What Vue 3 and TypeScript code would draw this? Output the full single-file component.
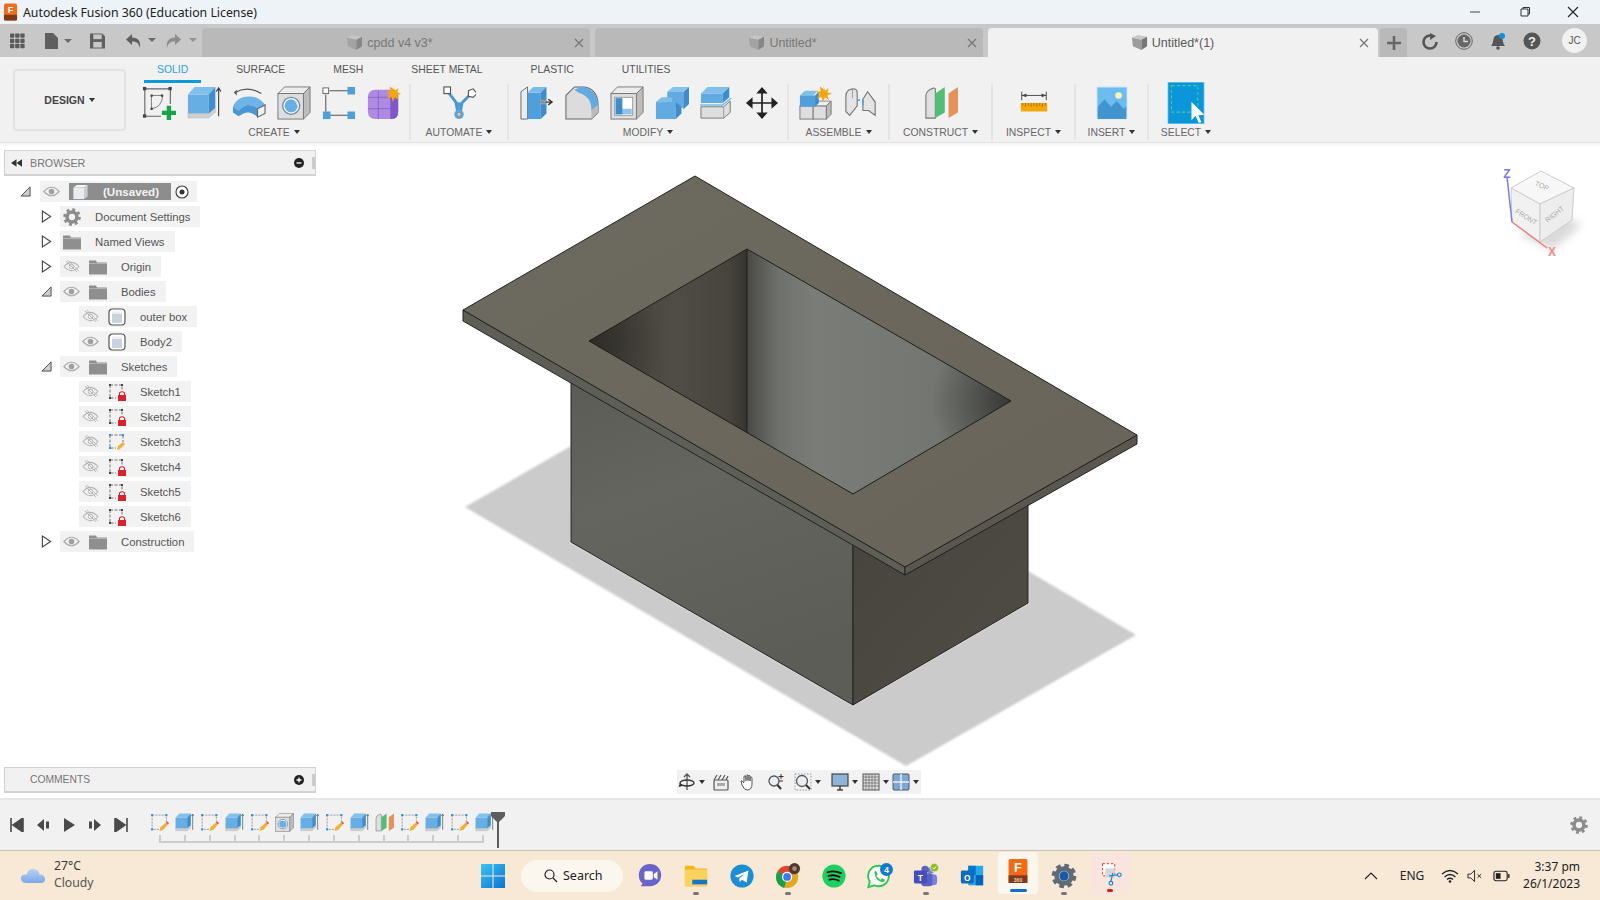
<script setup lang="ts">
interface Row { label: string; level: number; tri: string; eye: string; icon: string }
const rows: Row[] = [
  { label: 'Document Settings', level: 1, tri: 'closed', eye: '', icon: 'gear' },
  { label: 'Named Views', level: 1, tri: 'closed', eye: '', icon: 'folder' },
  { label: 'Origin', level: 1, tri: 'closed', eye: 'off', icon: 'folder' },
  { label: 'Bodies', level: 1, tri: 'open', eye: 'on', icon: 'folder' },
  { label: 'outer box', level: 2, tri: '', eye: 'off', icon: 'body' },
  { label: 'Body2', level: 2, tri: '', eye: 'on', icon: 'body' },
  { label: 'Sketches', level: 1, tri: 'open', eye: 'on', icon: 'folder' },
  { label: 'Sketch1', level: 2, tri: '', eye: 'off', icon: 'lock' },
  { label: 'Sketch2', level: 2, tri: '', eye: 'off', icon: 'lock' },
  { label: 'Sketch3', level: 2, tri: '', eye: 'off', icon: 'draw' },
  { label: 'Sketch4', level: 2, tri: '', eye: 'off', icon: 'lock' },
  { label: 'Sketch5', level: 2, tri: '', eye: 'off', icon: 'lock' },
  { label: 'Sketch6', level: 2, tri: '', eye: 'off', icon: 'lock' },
  { label: 'Construction', level: 1, tri: 'closed', eye: 'on', icon: 'folder' }
]
const ribbonTabs = ['SOLID', 'SURFACE', 'MESH', 'SHEET METAL', 'PLASTIC', 'UTILITIES']
const groups = [
  { label: 'CREATE', width: 272, icons: ['sketch', 'extrude', 'revolve', 'hole', 'pattern', 'form'] },
  { label: 'AUTOMATE', width: 98, icons: ['auto'] },
  { label: 'MODIFY', width: 280, icons: ['press', 'fillet', 'shell', 'combine', 'offset', 'move'] },
  { label: 'ASSEMBLE', width: 101, icons: ['newcomp', 'joint'] },
  { label: 'CONSTRUCT', width: 103, icons: ['plane'] },
  { label: 'INSPECT', width: 83, icons: ['measure'] },
  { label: 'INSERT', width: 73, icons: ['insert'] },
  { label: 'SELECT', width: 78, icons: ['select'] }
]
const timeline = ['draw', 'extrude', 'draw', 'extrude', 'draw', 'hole', 'extrude', 'draw', 'extrude', 'plane', 'draw', 'extrude', 'draw', 'extrude']
const documents = [
  { name: 'cpdd v4 v3*', active: false },
  { name: 'Untitled*', active: false },
  { name: 'Untitled*(1)', active: true }
]
</script>

<template>
  <div class="app">
    <svg class="defs" width="0" height="0" aria-hidden="true">
      <defs>
        <linearGradient id="holeL" x1="0" y1="0" x2="1" y2="0">
          <stop offset="0" stop-color="#413f39" /><stop offset="0.55" stop-color="#504d46" /><stop offset="0.88" stop-color="#47443e" /><stop offset="1" stop-color="#36342f" />
        </linearGradient>
        <linearGradient id="holeR" x1="0" y1="0" x2="1" y2="0">
          <stop offset="0" stop-color="#4a4a45" /><stop offset="0.12" stop-color="#6f716c" /><stop offset="0.25" stop-color="#7a7c77" /><stop offset="1" stop-color="#70726d" />
        </linearGradient>
        <radialGradient id="holeCornerL" gradientUnits="userSpaceOnUse" cx="589" cy="341" r="75">
          <stop offset="0" stop-color="#26241f" stop-opacity=".75" /><stop offset="1" stop-color="#26241f" stop-opacity="0" />
        </radialGradient>
        <radialGradient id="holeCornerR" gradientUnits="userSpaceOnUse" cx="1011" cy="401" r="80">
          <stop offset="0" stop-color="#2c2d2b" stop-opacity=".85" /><stop offset="1" stop-color="#2c2d2b" stop-opacity="0" />
        </radialGradient>
        <linearGradient id="bodyL" x1="0" y1="0" x2="0.3" y2="1">
          <stop offset="0" stop-color="#5c5c56" /><stop offset="0.4" stop-color="#65655f" /><stop offset="1" stop-color="#5d5d58" />
        </linearGradient>
        <linearGradient id="bodyR" x1="0" y1="0" x2="1" y2="1">
          <stop offset="0" stop-color="#47443e" /><stop offset="1" stop-color="#504d46" />
        </linearGradient>
        <linearGradient id="plate" x1="0" y1="0" x2="1" y2="1">
          <stop offset="0" stop-color="#6c6a61" /><stop offset="0.5" stop-color="#6b675c" /><stop offset="1" stop-color="#68645b" />
        </linearGradient>
        <filter id="soft" x="-5%" y="-5%" width="110%" height="110%"><feGaussianBlur stdDeviation="0.8" /></filter>
        <filter id="cubeShadow" x="-30%" y="-30%" width="160%" height="160%"><feGaussianBlur stdDeviation="4" /></filter>

        <symbol id="i-sketch" viewBox="0 0 36 36">
          <path d="M3 3H30V19M3 3V32H20" fill="none" stroke="#666" stroke-width="1.2" />
          <path d="M10 10H21M10 10V24" fill="none" stroke="#777" stroke-width="1" /><path d="M10 24Q21 23 22 10" fill="none" stroke="#777" stroke-width="1" />
          <g fill="#444"><rect x="1" y="1" width="3.5" height="3.5" /><rect x="28" y="1" width="3.5" height="3.5" /><rect x="1" y="30" width="3.5" height="3.5" /><rect x="9" y="9" width="2.4" height="2.4" /><rect x="20" y="9" width="2.4" height="2.4" /><rect x="9" y="23" width="2.4" height="2.4" /></g>
          <path d="M28.500 21V36M21 28.500H36" stroke="#15a44a" stroke-width="4.600" />
        </symbol>
        <symbol id="i-extrude" viewBox="0 0 36 36">
          <polygon points="1,28 1,34 23,34 30,28 30,23 23,28" fill="#cfcfcf" stroke="#bbb" stroke-width=".5" />
          <polygon points="1,9 23,9 23,29 1,29" fill="#67aee4" />
          <polygon points="1,9 8,1 30,1 23,9" fill="#82c0ec" />
          <polygon points="23,9 30,1 30,23 23,29" fill="#3f8ecb" />
          <path d="M33.500 32V3M31 6L33.500 2 36 6" fill="none" stroke="#444" stroke-width="1.200" />
        </symbol>
        <symbol id="i-revolve" viewBox="0 0 36 36">
          <path d="M3 7Q17 -1 31 8" fill="none" stroke="#555" stroke-width="1.200" /><path d="M2 7l3-3v6z" fill="#555" />
          <path d="M1 22C4 14 11 11 18 11S31 14 35 20L27 24C24 21 21 20 17 20S10 22 7 26Z" fill="#6fb4e7" />
          <path d="M1 22L7 26V32L1 28ZM7 26C10 22 14 20 17 20 21 20 24 21 27 24V33C23 29 20 28 17 28 13 28 10 30 7 32Z" fill="#4a97d4" />
          <path d="M27 24L35 20V29L27 33Z" fill="#f1f1f1" stroke="#666" stroke-width="1.200" />
        </symbol>
        <symbol id="i-hole" viewBox="0 0 36 36">
          <polygon points="1,8 8,1 35,1 28,8" fill="#ececec" stroke="#777" />
          <polygon points="28,8 35,1 35,28 28,35" fill="#bdbdbd" stroke="#777" />
          <rect x="1" y="8" width="27" height="27" fill="#dedede" stroke="#777" />
          <circle cx="15" cy="21" r="9" fill="#fff" stroke="#6b8ca8" stroke-width="1.500" /><circle cx="15" cy="21" r="7" fill="#67aee4" /><path d="M15 14a7 7 0 0 1 6 10a8 8 0 0 0-6-10Z" fill="#eef" />
        </symbol>
        <symbol id="i-pattern" viewBox="0 0 36 36">
          <path d="M8 5H28M4 9V27M28 31H8" stroke="#555" stroke-width="1.100" fill="none" />
          <rect x="1" y="2" width="6" height="6" fill="#fff" stroke="#666" />
          <rect x="27" y="1" width="8" height="8" fill="#4f9fdc" /><rect x="1" y="27" width="8" height="8" fill="#4f9fdc" /><rect x="27" y="27" width="8" height="8" fill="#4f9fdc" />
        </symbol>
        <symbol id="i-form" viewBox="0 0 36 36">
          <path d="M9 4H26Q33 4 33 10V27Q33 35 26 35H9Q1 35 1 27V12Q1 4 9 4Z" fill="#ae8ae2" />
          <path d="M25 10H33V27Q33 35 26 35H25Z" fill="#7f57c6" />
          <path d="M1 12H25M1 24H25M12 5V35M25 5V35" stroke="#8a64cd" stroke-width="1" fill="none" />
          <path d="M28 0l1.500 5 4-3-1.500 5 4 1-4 2 2 5-4.500-3-2 5-1.500-5-5 1 3-4-4-3 5-.5-1-5 4.500 3Z" fill="#f5a511" />
        </symbol>
        <symbol id="i-auto" viewBox="0 0 36 36">
          <path d="M7 7L16 19M31 8L20 19M15 19H21L19 30H17Z" fill="#5ea5dc" stroke="#4a97d4" stroke-width="3" />
          <rect x="2" y="1" width="7" height="7" fill="#fff" stroke="#555" stroke-width="1.200" />
          <polygon points="28,5 33,3 37,8 33,12 28,11" fill="#fff" stroke="#555" stroke-width="1.200" />
          <circle cx="18" cy="30" r="5" fill="#5ea5dc" /><circle cx="18" cy="30" r="2.200" fill="#ccc" stroke="#777" stroke-width=".6" />
        </symbol>
        <symbol id="i-press" viewBox="0 0 36 36">
          <polygon points="1,35 1,6 8,1 8,35" fill="#ececec" stroke="#666" />
          <polygon points="8,35 8,7 22,7 22,35" fill="#4f9fdc" />
          <polygon points="8,7 14,1 28,1 22,7" fill="#7abbe9" />
          <polygon points="22,7 28,1 28,29 22,35" fill="#3e8dca" />
          <path d="M21 17H34M30 14l4 3-4 3" fill="none" stroke="#333" stroke-width="1.400" /><rect x="21" y="14.500" width="7" height="5" fill="#aaa" opacity=".7" />
        </symbol>
        <symbol id="i-fillet" viewBox="0 0 36 36">
          <path d="M1 10L10 1H19C28 1 35 8 35 20V28L28 35H1Z" fill="#dcdcdc" stroke="#666" stroke-width="1.100" />
          <path d="M17 1C27 1 35 9 35 20L28 26C28 16 24 10 14 7L10 4Z" fill="#62aae2" />
          <path d="M28 26L35 20V28L28 35Z" fill="#bbb" />
        </symbol>
        <symbol id="i-shell" viewBox="0 0 36 36">
          <polygon points="1,8 8,1 35,1 28,8" fill="#ececec" stroke="#777" />
          <polygon points="28,8 35,1 35,28 28,35" fill="#bdbdbd" stroke="#777" />
          <rect x="1" y="8" width="27" height="27" fill="#dedede" stroke="#777" />
          <rect x="5" y="12" width="19" height="19" fill="#fff" stroke="#999" />
          <polygon points="6,13 13,13 13,24 23,24 23,30 6,30" fill="#8fc3ec" />
          <polygon points="6,13 13,13 13,30 6,30" fill="#3e8dca" />
        </symbol>
        <symbol id="i-combine" viewBox="0 0 36 36">
          <polygon points="13,6 19,1 36,1 29,6" fill="#86c2ec" />
          <polygon points="13,6 30,6 30,23 13,23" fill="#62aae2" /><polygon points="30,6 36,1 36,19 30,25" fill="#3e8dca" />
          <polygon points="1,17 7,12 18,12 18,17" fill="#7fbdea" />
          <polygon points="1,17 22,17 22,35 1,35" fill="#62aae2" /><polygon points="22,17 28,22 28,29 22,35" fill="#3e8dca" />
        </symbol>
        <symbol id="i-offset" viewBox="0 0 36 36">
          <polygon points="1,22 25,22 32,16 32,28 25,34 1,34" fill="#dedede" stroke="#777" />
          <path d="M25 22V34" stroke="#999" />
          <polygon points="1,8 8,1 31,1 24,8" fill="#82c0ec" /><polygon points="1,8 24,8 24,18 1,18" fill="#62aae2" /><polygon points="24,8 31,1 31,12 24,18" fill="#3e8dca" />
          <path d="M-1 20H24L33 13" fill="none" stroke="#7dbcea" stroke-width="1.600" />
        </symbol>
        <symbol id="i-move" viewBox="0 0 36 36">
          <path d="M18 4V32M4 18H32" stroke="#222" stroke-width="1.800" />
          <path d="M18 1l6 7H12ZM18 35l6-7H12ZM1 18l7-6V24ZM35 18l-7-6V24Z" fill="#222" />
        </symbol>
        <symbol id="i-newcomp" viewBox="0 0 36 36">
          <rect x="1" y="21" width="14" height="14" fill="#dedede" stroke="#777" /><rect x="15" y="21" width="14" height="14" fill="#dedede" stroke="#777" /><polygon points="15,21 20,16 34,16 29,21" fill="#eee" stroke="#888" /><polygon points="29,21 34,16 34,30 29,35" fill="#bbb" stroke="#777" />
          <polygon points="1,10 6,5 20,5 15,10" fill="#82c0ec" /><rect x="1" y="10" width="16" height="12" fill="#4f9fdc" /><polygon points="17,10 21,6 21,18 17,22" fill="#3e8dca" />
          <path d="M26 0l1.500 5 4-3-1.500 5 5 1-5 2 2 5-4.500-3-2 5-1.500-5-5 1 3-4-4-3 5-.5-1-5 4.500 3Z" fill="#f5a511" />
        </symbol>
        <symbol id="i-joint" viewBox="0 0 36 36">
          <path d="M2 11C2 5 6 3 10 3 14 3 14 6 14 9V21L6 31 2 27Z" fill="#e4e4e4" stroke="#777" stroke-width="1.200" />
          <path d="M20 14L25 6 33 17V31L26 26H20Z" fill="#e4e4e4" stroke="#777" stroke-width="1.200" />
          <path d="M14 15H17M20 14V20" stroke="#5ea5dc" stroke-width="2" fill="none" /><path d="M9 4V13" stroke="#999" />
        </symbol>
        <symbol id="i-plane" viewBox="0 0 36 36">
          <path d="M2 34V10Q2 5 10 2L12 3V34Z" fill="#dfdfdf" stroke="#777" stroke-width="1.100" />
          <polygon points="12,34 12,8 22,1 22,28" fill="#52bd75" />
          <polygon points="26,34 26,8 36,1 36,28" fill="#e5935a" />
        </symbol>
        <symbol id="i-measure" viewBox="0 0 36 36">
          <path d="M5 10H31M5 6V15M31 6V15" fill="none" stroke="#444" stroke-width="1" /><path d="M5 10l5-2v4ZM31 10l-5-2v4Z" fill="#444" />
          <rect x="4" y="18" width="28" height="9" fill="#f4a70f" /><path d="M6 18V21M9 18V22M12 18V21M15 18V22M18 18V21M21 18V22M24 18V21M27 18V22M30 18V21" stroke="#8a5a05" stroke-width=".7" />
        </symbol>
        <symbol id="i-insert" viewBox="0 0 36 36">
          <rect x="2" y="1" width="32" height="34" fill="#6cbcf2" stroke="#dcecf8" /><circle cx="25" cy="10" r="3.500" fill="#fdf4b4" />
          <path d="M3 35V22L10 14 17 22 23 16 30 24 33 22V35Z" fill="#3e8fca" opacity=".9" />
        </symbol>
        <symbol id="i-select" viewBox="0 0 40 46">
          <rect x="0" y="0" width="40" height="46" fill="#0a96d8" stroke="#bfe3f5" />
          <rect x="4" y="4" width="29" height="29" fill="none" stroke="#35d39a" stroke-width="1.200" stroke-dasharray="3.500 2.500" />
          <path d="M26 22V42L30.500 37 34 45 37 44 33.500 36.500 40 36Z" fill="#fff" />
        </symbol>
        <symbol id="i-draw" viewBox="0 0 36 36">
          <path d="M4 4H31V20M4 4V31H20" fill="none" stroke="#666" stroke-width="1.100" stroke-dasharray="4 2" />
          <g fill="#2a96e0"><rect x="2" y="2" width="4" height="4" /><rect x="29" y="2" width="4" height="4" /><rect x="2" y="29" width="4" height="4" /></g>
          <path d="M18 34L20 27 30 18 34 22 25 32Z" fill="#eeb23a" /><path d="M30 18l3-2 3 3-2 3Z" fill="#e24d4d" />
        </symbol>
        <symbol id="i-eye" viewBox="0 0 18 12">
          <path d="M1 6Q9 -3 17 6 9 15 1 6Z" fill="#f3f3f3" stroke="#aaa" stroke-width="1.300" /><circle cx="9" cy="6" r="3" fill="#a0a0a0" />
        </symbol>
        <symbol id="i-eyeoff" viewBox="0 0 18 14">
          <path d="M1 7Q9 -2 17 7 9 16 1 7Z" fill="none" stroke="#b4b4b4" stroke-width="1.200" /><circle cx="9" cy="7" r="2.500" fill="none" stroke="#b4b4b4" />
          <path d="M3 1L15 13M5 0L17 12" stroke="#b4b4b4" stroke-width="1" />
        </symbol>
        <symbol id="i-folder" viewBox="0 0 18 15">
          <path d="M0 1H7L8 3H18V15H0Z" fill="#8f8f8f" /><path d="M0 4H18" stroke="#bbb" stroke-width=".8" />
        </symbol>
        <symbol id="i-gear" viewBox="0 0 20 20">
          <circle cx="10" cy="10" r="5.500" fill="none" stroke="#8c8c8c" stroke-width="4" />
          <circle cx="10" cy="10" r="8.300" fill="none" stroke="#8c8c8c" stroke-width="3" stroke-dasharray="3.200 3.320" />
        </symbol>
        <symbol id="i-body" viewBox="0 0 18 18">
          <rect x="1" y="1" width="16" height="16" rx="3.500" fill="#fff" stroke="#555" stroke-width="1.200" />
          <rect x="4" y="5" width="10" height="10" fill="#c9d3dd" /><rect x="4" y="3.500" width="10" height="2.500" fill="#eee" />
        </symbol>
        <symbol id="i-lock" viewBox="0 0 18 18">
          <path d="M2 2H14V8M2 2V15H8" fill="none" stroke="#666" stroke-width=".9" stroke-dasharray="3 1.500" />
          <g fill="#444"><rect x="1" y="1" width="2" height="2" /><rect x="13" y="1" width="2" height="2" /><rect x="1" y="14" width="2" height="2" /></g>
          <rect x="10" y="12" width="8" height="6" fill="#d8222c" /><path d="M11.500 12V10Q14 7.500 16.500 10V12" fill="none" stroke="#d8222c" stroke-width="1.100" />
        </symbol>
        <symbol id="i-drawsm" viewBox="0 0 18 18">
          <path d="M2 2H15V9M2 2V15H8" fill="none" stroke="#666" stroke-width=".9" stroke-dasharray="3 1.500" />
          <g fill="#2a96e0"><rect x="1" y="1" width="2" height="2" /><rect x="14" y="1" width="2" height="2" /><rect x="1" y="14" width="2" height="2" /></g>
          <path d="M9 17L10 13 15 9 17 11 12 16Z" fill="#eeb23a" />
        </symbol>
        <symbol id="i-cube" viewBox="0 0 18 18">
          <polygon points="1,4 7,1 17,3 11,6" fill="#c9c9c9" /><polygon points="1,4 11,6 11,17 2,13" fill="#9c9c9c" /><polygon points="11,6 17,3 17,13 11,17" fill="#777" />
        </symbol>
      </defs>
    </svg>

    <header class="titlebar">
      <svg class="app-logo" viewBox="0 0 16 18">
        <rect x="1" y="0" width="14" height="18" rx="2" fill="#f26b1d" /><rect x="1" y="12" width="14" height="6" rx="1" fill="#7c3a16" />
        <text x="8" y="10.500" text-anchor="middle" class="logo-f">F</text>
      </svg>
      <span class="title-text">Autodesk Fusion 360 (Education License)</span>
      <div class="win-ctrls">
        <svg viewBox="0 0 12 12"><path d="M1 6H11" stroke="#444" fill="none" /></svg>
        <svg viewBox="0 0 12 12"><path d="M3 3H10V10H3ZM5 3V1.500H11.500V8H10" stroke="#333" fill="none" /></svg>
        <svg viewBox="0 0 12 12"><path d="M1 1L11 11M11 1L1 11" stroke="#222" fill="none" stroke-width="1.100" /></svg>
      </div>
    </header>

    <nav class="tabbar">
      <div class="quick">
        <svg class="q grid" viewBox="0 0 16 16"><g fill="#5a5a5a"><rect v-for="n in 9" :key="n" :x="(n - 1) % 3 * 5.500" :y="Math.floor((n - 1) / 3) * 5.500" width="4.600" height="4.600" rx=".8" /></g></svg>
        <svg class="q file" viewBox="0 0 28 16"><path d="M1 0H9L14 5V16H1Z" fill="#5f5f5f" /><path d="M20 6H28L24 10Z" fill="#6a6a6a" /></svg>
        <svg class="q save" viewBox="0 0 16 16"><path d="M0 0H13L16 3V16H0Z" fill="#5f5f5f" /><rect x="3.500" y="1" width="9" height="5" fill="#c8c8c8" /><rect x="3.500" y="9" width="9" height="6" fill="#c8c8c8" /></svg>
        <svg class="q undo" viewBox="0 0 34 16"><path d="M7 1L1 6.500 7 12V8.500C11 8 14 10 15 15 16 8 13 4.500 7 4.500Z" fill="#5f5f5f" /><path d="M23 5H31L27 9Z" fill="#6a6a6a" /></svg>
        <svg class="q redo" viewBox="0 0 34 16"><path d="M9 1L15 6.500 9 12V8.500C5 8 2 10 1 15 0 8 3 4.500 9 4.500Z" fill="#8d8d8d" /><path d="M23 5H31L27 9Z" fill="#929292" /></svg>
      </div>
      <div class="doc-tabs">
        <div v-for="d in documents" :key="d.name" class="doc-tab" :class="{ active: d.active }">
          <span class="doc-name"><svg class="doc-ic"><use href="#i-cube" /></svg>{{ d.name }}</span>
          <svg class="doc-x" viewBox="0 0 10 10"><path d="M1 1L9 9M9 1L1 9" stroke="#777" stroke-width="1.300" fill="none" /></svg>
        </div>
      </div>
      <div class="doc-plus"><svg viewBox="0 0 14 14"><path d="M7 0V14M0 7H14" stroke="#666" stroke-width="2.600" /></svg></div>
      <div class="tools">
        <svg viewBox="0 0 18 18"><circle cx="9" cy="10" r="6.500" fill="none" stroke="#555" stroke-width="2.600" stroke-dasharray="32 8" /><path d="M9 1L15 4 9 8Z" fill="#555" /></svg>
        <svg viewBox="0 0 18 18"><circle cx="9" cy="9" r="8.300" fill="none" stroke="#666" /><circle cx="9" cy="9" r="6.500" fill="#666" /><path d="M9 5V9.500H13" stroke="#ddd" stroke-width="1.400" fill="none" /></svg>
        <svg viewBox="0 0 18 18"><path d="M2 14C4 12 4 9 4.500 7 5 4 7 3 9 3S13 4 13.500 7C14 9 14 12 16 14Z" fill="#555" /><circle cx="9" cy="16" r="1.800" fill="#555" /><circle cx="13" cy="4" r="3" fill="#0f8fdc" /></svg>
        <svg viewBox="0 0 18 18"><circle cx="9" cy="9" r="8.500" fill="#555" /><text x="9" y="13.500" text-anchor="middle" class="help-q">?</text></svg>
      </div>
      <div class="avatar">JC</div>
    </nav>

    <section class="ribbon">
      <div class="design">DESIGN<i class="caret" /></div>
      <div class="ribbon-main">
        <div class="ribbon-tabs">
          <span v-for="(t, i) in ribbonTabs" :key="t" class="rtab" :class="{ on: i === 0 }">{{ t }}</span>
        </div>
        <div class="ribbon-groups">
          <div v-for="g in groups" :key="g.label" class="group" :style="{ width: g.width + 'px' }">
            <div class="group-icons">
              <svg v-for="ic in g.icons" :key="ic" class="rb-ic" :class="'ic-' + ic"><use :href="'#i-' + ic" /></svg>
            </div>
            <div class="group-label">{{ g.label }}<i class="caret" /></div>
          </div>
        </div>
      </div>
    </section>

    <main class="canvas">
      <svg class="scene" viewBox="0 143 1600 655">
        <polygon points="465,507 571,446 571,542 853,705 1028,603 1028,571 1136,635 906,766" fill="#cbcbcb" filter="url(#soft)" />
        <polygon points="571,380 853,544 853,705 571,542" fill="url(#bodyL)" stroke="#222" stroke-width="1" />
        <polygon points="853,544 905,575 1028,505 1028,603 853,705" fill="url(#bodyR)" stroke="#222" stroke-width="1" />
        <polygon points="463,310 905,567 905,575 463,321" fill="#5d5e56" stroke="#222" stroke-width="1" />
        <polygon points="905,567 1137,435 1137,444 905,575" fill="#5a5750" stroke="#222" stroke-width="1" />
        <polygon points="695,176 1137,435 905,567 463,310" fill="url(#plate)" stroke="#222" stroke-width="1" />
        <polygon points="589,341 747,249 747,433" fill="url(#holeL)" />
        <polygon points="589,341 747,249 747,433" fill="url(#holeCornerL)" />
        <polygon points="747,249 1011,401 853,494 747,433" fill="url(#holeR)" />
        <polygon points="747,249 1011,401 853,494 747,433" fill="url(#holeCornerR)" />
        <path d="M589 341L747 249 1011 401 853 494ZM747 249V433" fill="none" stroke="#1e1e1e" stroke-width="1" />
      </svg>

      <svg class="viewcube" viewBox="1495 160 100 105">
        <polygon points="1520,235 1552,250 1582,225 1550,210" fill="#bbb" opacity=".55" filter="url(#cubeShadow)" />
        <polygon points="1541,171 1574,188 1540,204 1511,188" fill="#f7f7f7" stroke="#ccc" />
        <polygon points="1511,188 1540,204 1540,242 1512,222" fill="#f1f1f1" stroke="#ccc" />
        <polygon points="1540,204 1574,188 1572,220 1540,242" fill="#ededed" stroke="#ccc" />
        <path d="M1507 177L1512 222" stroke="#7a7aee" stroke-width="1.500" />
        <path d="M1512 222L1547 248" stroke="#e88080" stroke-width="1.500" />
        <text x="1507" y="178" text-anchor="middle" class="axis z">Z</text>
        <text x="1552" y="256" text-anchor="middle" class="axis x">X</text>
        <text x="1541" y="188" text-anchor="middle" class="cube-t" transform="rotate(25 1541 188)">TOP</text>
        <text x="1525" y="219" text-anchor="middle" class="cube-t" transform="rotate(32 1525 219)">FRONT</text>
        <text x="1556" y="216" text-anchor="middle" class="cube-t" transform="rotate(-38 1556 216)">RIGHT</text>
      </svg>

      <aside class="side">
        <div class="panel-head">
          <svg class="back" viewBox="0 0 12 8"><path d="M6 0V8L0 4ZM12 0V8L6 4Z" fill="#333" /></svg>
          <span class="panel-title">BROWSER</span>
          <svg class="dot" viewBox="0 0 10 10"><circle cx="5" cy="5" r="5" fill="#222" /><path d="M2.500 5H7.500" stroke="#fff" stroke-width="1.300" /></svg>
          <span class="grip" />
        </div>
        <div class="tree">
          <div class="row lv0">
            <svg class="tri" viewBox="0 0 12 12"><path d="M1 11L11 1V11Z" fill="#ccc" stroke="#444" stroke-width="1" /></svg>
            <div class="pill root-pill">
              <svg class="eye"><use href="#i-eye" /></svg>
              <div class="root-block">
                <svg class="root-ic" viewBox="0 0 18 18"><polygon points="1,4 5,1 17,1 13,4" fill="#f5f5f5" /><rect x="1" y="4" width="12" height="13" fill="#e8ecef" /><polygon points="13,4 17,1 17,14 13,17" fill="#c9ced3" /></svg>
                <span>(Unsaved)</span>
              </div>
              <svg class="radio" viewBox="0 0 14 14"><circle cx="7" cy="7" r="6" fill="#fff" stroke="#444" stroke-width="1.200" /><circle cx="7" cy="7" r="2.500" fill="#333" /></svg>
            </div>
          </div>
          <div v-for="r in rows" :key="r.label" class="row" :class="'lv' + r.level">
            <svg v-if="r.tri === 'closed'" class="tri" viewBox="0 0 12 14"><path d="M1.500 1V13L10.500 7Z" fill="#fff" stroke="#444" stroke-width="1.200" /></svg>
            <svg v-else-if="r.tri === 'open'" class="tri" viewBox="0 0 12 12"><path d="M1 11L11 1V11Z" fill="#ccc" stroke="#444" stroke-width="1" /></svg>
            <span v-else class="tri" />
            <div class="pill">
              <svg v-if="r.eye === 'on'" class="eye"><use href="#i-eye" /></svg>
              <svg v-if="r.eye === 'off'" class="eye"><use href="#i-eyeoff" /></svg>
              <svg class="node-ic" :class="{ solo: !r.eye }">
                <use :href="'#i-' + (r.icon === 'draw' ? 'drawsm' : r.icon)" />
              </svg>
              <span class="row-label">{{ r.label }}</span>
            </div>
          </div>
        </div>
        <div class="panel-head comments">
          <span class="panel-title">COMMENTS</span>
          <svg class="dot" viewBox="0 0 10 10"><circle cx="5" cy="5" r="5" fill="#222" /><path d="M2.500 5H7.500M5 2.500V7.500" stroke="#fff" stroke-width="1.300" /></svg>
          <span class="grip" />
        </div>
      </aside>

      <div class="navbar">
        <svg class="nv" viewBox="0 0 18 18"><path d="M9 1V17M6 4L9 1 12 4" fill="none" stroke="#555" stroke-width="1.300" /><ellipse cx="9" cy="10" rx="7" ry="3" fill="none" stroke="#333" stroke-width="1.400" /><path d="M2 10l-1.500 4 4-1Z" fill="#333" /></svg><i class="caret cr" />
        <svg class="nv m7" viewBox="0 0 18 18"><rect x="2" y="7" width="14" height="10" rx="1" fill="#eee" stroke="#555" stroke-width="1.200" /><rect x="5" y="10" width="8" height="3" fill="#aaa" /><path d="M2 7L5 2M6 7L9 2M10 7L13 2M14 7L16 3" stroke="#555" stroke-width="1.200" /></svg>
        <svg class="nv m9" viewBox="0 0 18 18"><path d="M5 9V4Q5 2.500 6 3 7 3 7 5V8M7 7V2.500Q7.500 1 9 2.500V8M9 7V3Q10 1.500 11 3V8M11 8V4.500Q12.500 3 13 5V11Q13 17 8 17 5 17 3 12L2 8Q3 7 5 10" fill="#fff" stroke="#555" stroke-width="1" /></svg>
        <svg class="nv m10" viewBox="0 0 18 18"><circle cx="7" cy="8" r="5" fill="#e9eff4" stroke="#555" stroke-width="1.300" /><path d="M10.500 12L14 16" stroke="#333" stroke-width="2" /><path d="M14 1V6M11.500 3.500H16.500M12 8H16" stroke="#333" /></svg>
        <svg class="nv m9" viewBox="0 0 18 18"><rect x="1" y="1" width="16" height="16" fill="none" stroke="#999" stroke-dasharray="1.500 1.500" /><circle cx="8" cy="8" r="5.500" fill="#e9eff4" stroke="#555" stroke-width="1.300" /><path d="M12 12L16 16" stroke="#333" stroke-width="2" /></svg><i class="caret cr" />
        <svg class="nv m10" viewBox="0 0 18 18"><rect x="1" y="1" width="16" height="12" fill="#8eb4d8" stroke="#444" stroke-width="1.200" /><path d="M6 17H12M9 13V17" stroke="#444" stroke-width="1.600" /></svg><i class="caret cr" />
        <svg class="nv m4" viewBox="0 0 18 18"><rect x="1" y="1" width="16" height="16" fill="#ddd" stroke="#555" /><path d="M4 1V17M7 1V17M10 1V17M13 1V17M1 4H17M1 7H17M1 10H17M1 13H17" stroke="#666" stroke-width=".7" /></svg><i class="caret cr" />
        <svg class="nv m3" viewBox="0 0 18 18"><rect x="1" y="1" width="16" height="16" rx="1" fill="#7fa8d0" stroke="#556" /><path d="M9 1V17M1 9H17" stroke="#eef" stroke-width="1.400" /></svg><i class="caret cr" />
      </div>
    </main>

    <section class="timeline">
      <div class="tl-controls">
        <svg viewBox="0 0 14 14"><path d="M1 0V14M13 0V14L3 7Z" stroke="#4a4a4a" stroke-width="1.600" fill="#4a4a4a" /></svg>
        <svg viewBox="0 0 14 14"><path d="M8 1V13L1 7Z" fill="#4a4a4a" /><rect x="10" y="3.500" width="3" height="7" fill="#4a4a4a" /></svg>
        <svg viewBox="0 0 14 14"><path d="M2 0V14L13 7Z" fill="#4a4a4a" /></svg>
        <svg viewBox="0 0 14 14"><path d="M6 1V13L13 7Z" fill="#4a4a4a" /><rect x="1" y="3.500" width="3" height="7" fill="#4a4a4a" /></svg>
        <svg viewBox="0 0 14 14"><path d="M13 0V14M1 0V14L11 7Z" stroke="#4a4a4a" stroke-width="1.600" fill="#4a4a4a" /></svg>
      </div>
      <div class="tl-track">
        <div class="tl-icons">
          <svg v-for="(t, i) in timeline" :key="i" class="tl-ic"><use :href="'#i-' + t" /></svg>
        </div>
        <div class="tl-bracket">
          <i v-for="n in 14" :key="n" />
        </div>
      </div>
      <svg class="tl-marker" viewBox="0 0 14 36"><path d="M0 0H14V4L8 10V36H6V10L0 4Z" fill="#5e5e5e" /></svg>
      <svg class="tl-gear"><use href="#i-gear" /></svg>
    </section>

    <footer class="taskbar">
      <div class="weather">
        <svg class="cloud" viewBox="0 0 28 18"><defs><linearGradient id="cl" x1="0" y1="0" x2="0" y2="1"><stop offset="0" stop-color="#b8d2f5" /><stop offset="1" stop-color="#7ca8e6" /></linearGradient></defs><path d="M6 17Q0 16 1 11 2 7 7 8 9 1 15 2 21 3 21 8 27 8 27 13 27 17 22 17Z" fill="url(#cl)" /></svg>
        <div class="w-text"><span>27°C</span><span>Cloudy</span></div>
      </div>
      <svg class="winlogo" viewBox="0 0 24 24"><defs><linearGradient id="wl" x1="0" y1="0" x2="1" y2="1"><stop offset="0" stop-color="#3ac4f4" /><stop offset="1" stop-color="#0a73d1" /></linearGradient></defs><path d="M0 0H11.500V11.500H0ZM12.500 0H24V11.500H12.500ZM0 12.500H11.500V24H0ZM12.500 12.500H24V24H12.500Z" fill="url(#wl)" /></svg>
      <div class="search"><svg viewBox="0 0 14 14"><circle cx="5.500" cy="5.500" r="4.500" fill="none" stroke="#222" stroke-width="1.200" /><path d="M9 9L13 13" stroke="#222" stroke-width="1.200" /></svg><span>Search</span></div>
      <div class="apps">
        <div class="app-cell"><svg viewBox="0 0 28 28"><path d="M14 1C21 1 26 6 26 13S21 25 14 25H4L6 22C3 20 2 17 2 13 2 6 7 1 14 1Z" fill="#6a63c9" /><rect x="8" y="9" width="9" height="9" rx="1.500" fill="#fff" /><path d="M18 12L22 9V18L18 15Z" fill="#fff" /></svg></div>
        <div class="app-cell"><svg viewBox="0 0 28 28"><path d="M2 3H11L14 6H26V25H2Z" fill="#f3b71a" /><rect x="2" y="7" width="24" height="18" fill="#fbd25e" /><rect x="10" y="18" width="16" height="5" fill="#1577c8" /></svg><b class="run" /></div>
        <div class="app-cell"><svg viewBox="0 0 28 28"><circle cx="14" cy="14" r="12.500" fill="#1d8fd0" /><path d="M6 14L21 8 19 21 14 18 11.500 20.500 11 16.500 18 11 9.500 15.500Z" fill="#fff" /></svg></div>
        <div class="app-cell"><svg viewBox="0 0 28 28"><circle cx="13" cy="15" r="12" fill="#e0a920" /><path d="M13 15L3 9A12 12 0 0 1 24 10Z" fill="#db4437" /><path d="M13 15L3 9A12 12 0 0 0 10 27Z" fill="#1a9e4b" /><circle cx="13" cy="15" r="5.500" fill="#fff" /><circle cx="13" cy="15" r="4.200" fill="#3d7ce8" /><circle cx="21" cy="6" r="6" fill="#4a3a33" /><circle cx="21" cy="6" r="2.500" fill="#b8876c" /></svg><b class="run" /></div>
        <div class="app-cell"><svg viewBox="0 0 28 28"><circle cx="14" cy="14" r="12.500" fill="#1ed05f" /><path d="M7 10Q14 7.500 21.500 11M8 14Q14 12 20 15M9 18Q14 16.500 19 19" fill="none" stroke="#111" stroke-width="2" stroke-linecap="round" /></svg></div>
        <div class="app-cell"><svg viewBox="0 0 28 28"><path d="M12 3A11 11 0 0 0 3 20L1.500 26 8 24A11 11 0 1 0 12 3Z" fill="#fff" stroke="#2fc552" stroke-width="2" /><path d="M8 10Q9 8 10 9L11.500 12 10 14Q12 17 15 18L16.500 16.500 19.500 18Q19 21 16 20.500 9 19 8 10Z" fill="#2fc552" /><circle cx="21" cy="7" r="7" fill="#0f78d2" /><text x="21" y="10.500" text-anchor="middle" class="badge">4</text></svg></div>
        <div class="app-cell"><svg viewBox="0 0 28 28"><circle cx="19" cy="8" r="3.500" fill="#7b83d8" /><rect x="14" y="12" width="12" height="12" rx="4" fill="#7b83d8" /><circle cx="13" cy="7" r="4" fill="#5962c4" /><rect x="9" y="11" width="12" height="14" rx="3" fill="#5962c4" /><rect x="1" y="8" width="14" height="14" rx="1.500" fill="#464eb8" /><text x="8" y="19" text-anchor="middle" class="badge">T</text><circle cx="23" cy="5" r="4.500" fill="#8cbd18" stroke="#ddd" /><path d="M21 5L22.500 6.500 25 3.500" stroke="#fff" fill="none" /></svg><b class="run" /></div>
        <div class="app-cell"><svg viewBox="0 0 28 28"><rect x="10" y="3" width="16" height="21" fill="#28a8ea" /><rect x="10" y="3" width="8" height="10" fill="#0078d4" /><rect x="18" y="13" width="8" height="11" fill="#0364b8" /><rect x="2" y="8" width="14" height="14" rx="1.500" fill="#0f6cbd" /><text x="9" y="19" text-anchor="middle" class="badge">O</text></svg></div>
        <div class="app-cell tile active"><svg viewBox="0 0 28 30"><rect x="3" y="1" width="22" height="28" rx="2" fill="#f46a14" /><rect x="3" y="20" width="22" height="9" fill="#7c3d1d" /><text x="14" y="16" text-anchor="middle" class="f-big">F</text><text x="14" y="27.500" text-anchor="middle" class="f-sm">360</text></svg><b class="run blue" /></div>
        <div class="app-cell"><svg viewBox="0 0 28 28"><circle cx="14" cy="14" r="8" fill="none" stroke="#5f6b76" stroke-width="5" /><circle cx="14" cy="14" r="11.300" fill="none" stroke="#5f6b76" stroke-width="4" stroke-dasharray="5 3.870" /><circle cx="14" cy="14" r="5" fill="#1a58a8" /></svg><b class="run" /></div>
        <div class="app-cell tile pink"><svg viewBox="0 0 28 28"><rect x="6" y="4" width="13" height="13" fill="#fff" stroke="#d82c2c" stroke-dasharray="2.500 2" /><rect x="9" y="9" width="10" height="10" fill="#d6d6d6" /><circle cx="15" cy="25" r="2" fill="none" stroke="#1f86d2" stroke-width="1.300" /><circle cx="24" cy="16" r="2" fill="none" stroke="#1f86d2" stroke-width="1.300" /><path d="M15 23L17 14M22 16L13 17" stroke="#1f86d2" stroke-width="1.300" /></svg><b class="run red" /></div>
      </div>
      <div class="tray">
        <svg class="chev" viewBox="0 0 14 8"><path d="M1 7L7 1 13 7" fill="none" stroke="#222" stroke-width="1.100" /></svg>
        <span class="eng">ENG</span>
        <svg class="wifi" viewBox="0 0 18 14"><path d="M1 5Q9 -2 17 5M3.500 8Q9 3 14.500 8M6 10.500Q9 8 12 10.500" fill="none" stroke="#222" stroke-width="1.300" /><circle cx="9" cy="12.500" r="1.300" fill="#222" /></svg>
        <svg class="vol" viewBox="0 0 18 14"><path d="M1 5H4L8 1V13L4 9H1Z" fill="none" stroke="#222" /><path d="M11 5L15 9M15 5L11 9" stroke="#222" /></svg>
        <svg class="batt" viewBox="0 0 18 12"><rect x="1" y="1" width="14" height="10" rx="2" fill="none" stroke="#222" stroke-width="1.200" /><rect x="3" y="3" width="5" height="6" fill="#222" /><rect x="16" y="4" width="1.500" height="4" fill="#222" /></svg>
        <div class="clock"><span>3:37 pm</span><span>26/1/2023</span></div>
      </div>
    </footer>
  </div>
</template>

<style scoped>
.app {
  width: 1600px;
  height: 900px;
  display: flex;
  flex-direction: column;
  overflow: hidden;
  background: #fff;
  font-family: "Liberation Sans", Arial, sans-serif;
  color: #555;
}
.defs { position: absolute; }
.caret {
  display: inline-block;
  width: 0;
  height: 0;
  margin-left: 4px;
  border-left: 3px solid transparent;
  border-right: 3px solid transparent;
  border-top: 4px solid #333;
  vertical-align: 2px;
}

/* title */
.titlebar { height: 24px; flex: none; background: #eef3f8; display: flex; align-items: center; padding-left: 3px; }
.app-logo { width: 15px; height: 18px; }
.logo-f { font: bold 10px "Liberation Sans", sans-serif; fill: #fff; }
.title-text { margin-left: 5px; font: 12.3px "Noto Sans", sans-serif; color: #222; }
.win-ctrls { margin-left: auto; display: flex; gap: 37px; padding-right: 21px; }
.win-ctrls svg { width: 12px; height: 12px; }

/* tabs */
.tabbar { height: 33px; flex: none; background: #c8c8c8; display: flex; align-items: flex-end; }
.quick { width: 202px; height: 33px; flex: none; position: relative; display: flex; align-items: center; padding-left: 10px; box-sizing: border-box; }
.q { height: 16px; flex: none; }
.grid { width: 15px; }
.file { width: 28px; margin-left: 19px; }
.save { width: 15px; margin-left: 18px; }
.undo { width: 34px; margin-left: 20px; }
.redo { width: 34px; margin-left: 7px; }
.doc-tabs { display: flex; gap: 5px; }
.doc-tab {
  width: 388px;
  height: 29px;
  background: #b9b9b9;
  border-radius: 4px 4px 0 0;
  display: flex;
  align-items: center;
  justify-content: center;
  position: relative;
  padding-right: 13px;
  box-sizing: border-box;
  font-size: 12.5px;
  color: #777;
}
.doc-tab.active { background: #f1f1f1; width: 390px; color: #5a5a5a; padding-right: 21px; }
.doc-name { display: flex; align-items: center; gap: 4px; }
.doc-ic { width: 17px; height: 17px; opacity: .75; }
.doc-tab.active .doc-ic { opacity: 1; }
.doc-x { width: 10px; height: 10px; position: absolute; right: 6px; top: 10px; }
.doc-tab.active .doc-x { right: 9px; }
.doc-plus { width: 27px; height: 29px; margin-left: 2px; background: #b9b9b9; border-radius: 3px 3px 0 0; display: flex; align-items: center; justify-content: center; }
.doc-plus svg { width: 14px; height: 14px; }
.tools { display: flex; gap: 16px; height: 33px; align-items: center; margin-left: 14px; }
.tools svg { width: 18px; height: 18px; }
.help-q { font: bold 13px "Liberation Sans", sans-serif; fill: #eee; }
.avatar { width: 25px; height: 25px; border-radius: 50%; background: #f1f1f1; margin: 0 0 4px 21px; display: flex; align-items: center; justify-content: center; font-size: 10px; color: #555; }

/* ribbon */
.ribbon { height: 86px; flex: none; background: #f1f1f1; border-bottom: 1px solid #e2e2e2; box-shadow: 0 3px 0 #f7f7f7; position: relative; z-index: 1; display: flex; box-sizing: border-box; }
.design {
  width: 113px;
  height: 62px;
  margin: 12px 13px 0 13px;
  box-sizing: border-box;
  border: 2px solid #e2e2e2;
  border-radius: 4px;
  display: flex;
  align-items: center;
  justify-content: center;
  font-size: 10.5px;
  font-weight: bold;
  color: #444;
}
.ribbon-main { display: flex; flex-direction: column; }
.ribbon-tabs { display: flex; gap: 22px; padding-left: 5px; height: 27px; box-sizing: border-box; }
.rtab { padding: 7px 13px 0; font-size: 10.4px; color: #555; height: 26px; box-sizing: border-box; }
.rtab.on { color: #2aa1e0; border-bottom: 3px solid #0e9ad9; }
.ribbon-groups { display: flex; }
.group { display: flex; flex-direction: column; align-items: center; height: 56px; border-right: 2px solid #e4e4e4; box-sizing: border-box; }
.group:last-child { border-right: none; margin-left: -2px; }
.group:nth-child(1) .group-icons { margin-left: -6px; }
.group:nth-child(3) .group-icons { margin-left: 2px; }
.group-icons { display: flex; gap: 11px; height: 38px; align-items: center; }
.rb-ic { width: 34px; height: 34px; flex: none; }
.ic-select { width: 40px; height: 42px; }
.group-label { font-size: 10.4px; color: #666; margin-top: 5px; white-space: nowrap; }

/* canvas */
.canvas { flex: 1; position: relative; background: #fff; overflow: hidden; }
.scene { position: absolute; inset: 0; width: 1600px; height: 655px; }
.viewcube { position: absolute; left: 1495px; top: 17px; width: 100px; height: 105px; }
.axis { font: bold 12px "Liberation Sans", sans-serif; }
.axis.z { fill: #7a7aee; }
.axis.x { fill: #ee8888; }
.cube-t { font: 7px "Liberation Sans", sans-serif; fill: #aaa; }
.side { position: absolute; left: 4px; top: 7px; bottom: 5px; width: 312px; display: flex; flex-direction: column; }
.panel-head { height: 26px; flex: none; background: #f1f1f1; border: 1px solid #d2d2d2; border-width: 1px 1px 2px 1px; box-sizing: border-box; display: flex; align-items: center; padding-left: 6px; }
.panel-title { font-size: 10.7px; color: #777; margin-left: 8px; }
.comments .panel-title { margin-left: 19px; font-size: 10.3px; }
.back { width: 11px; height: 8px; }
.dot { width: 10px; height: 10px; margin-left: auto; }
.grip { width: 3px; height: 12px; margin: 0 0 0 8px; background: #ccc; }
.tree { flex: 1; padding-top: 3px; }
.row { height: 25px; display: flex; align-items: center; }
.lv0 { padding-left: 16px; }
.lv1 { padding-left: 37px; }
.lv2 { padding-left: 56px; }
.tri { width: 11px; height: 13px; margin-right: 8px; flex: none; }
.lv0 .tri { margin-right: 9px; }
.pill { height: 21px; background: #f2f2f2; display: flex; align-items: center; padding: 0 10px 0 3px; font-size: 11.3px; color: #555; }
.eye { width: 17px; height: 13px; margin-right: 9px; flex: none; }
.node-ic { width: 18px; height: 18px; margin-right: 14px; flex: none; }
.root-pill { padding-right: 8px; }
.root-block { width: 102px; height: 17px; background: #8d8d8d; display: flex; align-items: center; color: #f4f4f4; font-weight: bold; font-size: 11.6px; padding-left: 3px; box-sizing: border-box; }
.root-ic { width: 17px; height: 16px; margin-right: 14px; }
.radio { width: 14px; height: 14px; margin-left: 4px; }

.navbar { position: absolute; left: 677px; top: 627px; width: 244px; height: 24px; background: #f2f2f2; display: flex; align-items: center; padding-left: 1px; box-sizing: border-box; }
.nv { flex: none; width: 18px; height: 18px; }
.m3 { margin-left: 3px; }
.m4 { margin-left: 4px; }
.m7 { margin-left: 7px; }
.m9 { margin-left: 9px; }
.m10 { margin-left: 10px; }
.cr { margin-left: 3px; }

/* timeline */
.timeline { height: 52px; flex: none; background: #f1f1f1; border-top: 2px solid #e6e6e6; box-sizing: border-box; display: flex; align-items: flex-start; }
.tl-controls { display: flex; width: 147px; flex: none; gap: 12px; padding: 18px 0 0 10px; box-sizing: border-box; }
.tl-controls svg { width: 14px; height: 14px; flex: none; }
.tl-track { display: flex; flex-direction: column; width: 350px; flex: none; padding-top: 13px; box-sizing: border-box; }
.tl-icons { display: flex; }
.tl-ic { width: 19px; height: 19px; margin: 0 3px; flex: none; }
.tl-bracket { display: flex; margin: 3px 0 0 12px; width: 325px; height: 6px; border-bottom: 2px solid #ccc; box-sizing: content-box; justify-content: space-between; }
.tl-bracket i { width: 2px; height: 6px; background: #ccc; }
.tl-marker { width: 14px; height: 36px; margin: 12px 0 0 -6px; flex: none; }
.tl-gear { width: 18px; height: 18px; margin: 16px 12px 0 auto; }

/* taskbar */
.taskbar { height: 50px; flex: none; background: #f7e9d6; border-top: 1px solid #c9c2b4; box-sizing: border-box; display: flex; align-items: center; font-family: "Noto Sans", sans-serif; color: #222; }
.weather { width: 481px; flex: none; display: flex; align-items: center; padding-left: 20px; box-sizing: border-box; }
.cloud { width: 26px; height: 17px; }
.w-text { margin: -2px 0 0 8px; display: flex; flex-direction: column; font-size: 12.2px; line-height: 16.5px; color: #3a3a3a; }
.w-text span:last-child { color: #555; }
.winlogo { width: 24px; height: 24px; flex: none; }
.search { width: 102px; height: 32px; margin-left: 16px; background: #fbf7ef; border-radius: 16px; display: flex; align-items: center; padding-left: 23px; box-sizing: border-box; font-size: 12.5px; gap: 5px; flex: none; }
.search svg { width: 14px; height: 14px; }
.apps { display: flex; margin-left: 4px; }
.app-cell { width: 46px; height: 48px; display: flex; align-items: center; justify-content: center; position: relative; flex: none; }
.app-cell svg { width: 26px; height: 26px; }
.tile { width: 40px; height: 42px; margin: 0 3px; border-radius: 4px; }
.tile.active { background: #fbf6ee; }
.tile.pink { background: #f9e4de; }
.tile.active svg { width: 24px; height: 28px; margin-bottom: 4px; }
.run { position: absolute; bottom: 5px; left: 50%; width: 6px; height: 3px; margin-left: -3px; background: #777; border-radius: 2px; }
.tile .run { bottom: 2px; }
.run.blue { width: 17px; margin-left: -8px; background: #0a6fd0; }
.run.red { background: #d61a1a; }
.badge { font: bold 9px "Liberation Sans", sans-serif; fill: #fff; }
.f-big { font: bold 15px "Liberation Sans", sans-serif; fill: #fff; }
.f-sm { font: bold 6px "Liberation Sans", sans-serif; fill: #f5c9a4; }
.tray { margin-left: auto; display: flex; align-items: center; padding-right: 20px; }
.chev { width: 14px; height: 8px; }
.eng { margin-left: 19px; font-size: 12px; width: 30px; text-align: center; }
.wifi { width: 18px; height: 14px; margin-left: 14px; }
.vol { width: 17px; height: 14px; margin-left: 8px; }
.batt { width: 17px; height: 12px; margin-left: 9px; }
.clock { margin: -2px 0 0 13px; display: flex; flex-direction: column; align-items: flex-end; font-size: 12px; line-height: 17px; }
</style>

<style>
html, body { margin: 0; padding: 0; background: #fff; }
</style>
